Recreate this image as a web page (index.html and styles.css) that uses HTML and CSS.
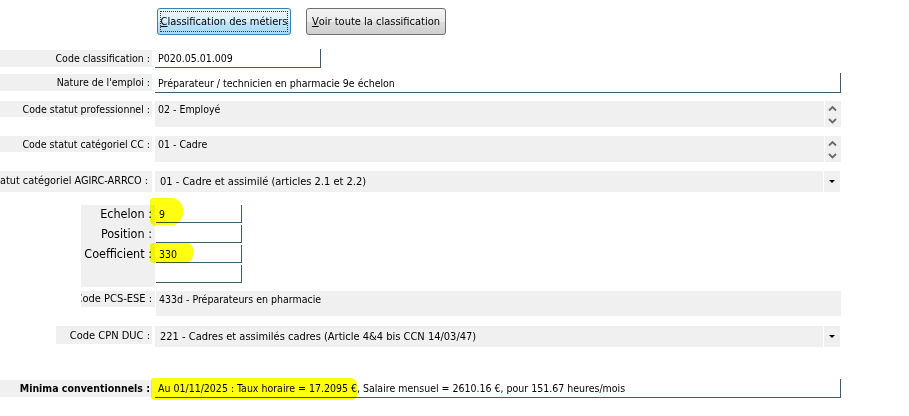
FILE: index.html
```html
<html>
    <head>
        <link rel="stylesheet" href="styles.css">
    </head>
    <body>
        <div class="toolbar">
            <div class="btn btnFocus"><span class="focusRing"><u>C</u>lassification des métiers</span></div>
            <div class="btn"><u>V</u>oir toute la classification</div>
        </div>

        <div class="form">
            <div class="row rowCode">
                <div class="lbl">Code classification :</div>
                <div class="edit editShort"><span class="txt">P020.05.01.009</span></div>
            </div>

            <div class="row rowNature">
                <div class="lbl">Nature de l'emploi :</div>
                <div class="edit editWide"><span class="txt">Préparateur / technicien en pharmacie 9e échelon</span></div>
            </div>

            <div class="row rowMemo">
                <div class="lbl lblTop">Code statut professionnel :</div>
                <div class="memo">
                    <div class="memoText">02 - Employé</div>
                    <div class="spin">
                        <svg width="16" height="26" viewBox="0 0 16 26"><path d="M4 9.5 L7.5 6 L11 9.5" fill="none" stroke="#6a6a6a" stroke-width="1.8"/><path d="M4 18 L7.5 21.5 L11 18" fill="none" stroke="#6a6a6a" stroke-width="1.8"/></svg>
                    </div>
                </div>
            </div>

            <div class="row rowMemo rowCC">
                <div class="lbl lblTop">Code statut catégoriel CC :</div>
                <div class="memo">
                    <div class="memoText">01 - Cadre</div>
                    <div class="spin">
                        <svg width="16" height="26" viewBox="0 0 16 26"><path d="M4 9.5 L7.5 6 L11 9.5" fill="none" stroke="#6a6a6a" stroke-width="1.8"/><path d="M4 18 L7.5 21.5 L11 18" fill="none" stroke="#6a6a6a" stroke-width="1.8"/></svg>
                    </div>
                </div>
            </div>

            <div class="row rowCombo rowAgirc">
                <div class="lbl lblBig"><span>Statut catégoriel AGIRC-ARRCO :</span></div>
                <div class="combo">
                    <div class="comboText">01 - Cadre et assimilé (articles 2.1 et 2.2)</div>
                    <div class="comboBtn"><span class="arrow"></span></div>
                </div>
            </div>

            <div class="echelonPanel">
                <div class="echelonLabels">
                    <div class="eLbl">Echelon :</div>
                    <div class="eLbl">Position :</div>
                    <div class="eLbl">Coefficient :</div>
                    <div class="eLbl"></div>
                </div>
                <div class="echelonInputs">
                    <div class="edit editSmall"><span class="marker markerEchelon"></span><span class="txt">9</span></div>
                    <div class="edit editSmall"><span class="txt"></span></div>
                    <div class="edit editSmall"><span class="marker markerCoef"></span><span class="txt">330</span></div>
                    <div class="edit editSmall"><span class="txt"></span></div>
                </div>
            </div>

            <div class="row rowPcs">
                <div class="lbl lblPcs"><span>Code PCS-ESE :</span></div>
                <div class="memo memoPlain">
                    <div class="memoText">433d - Préparateurs en pharmacie</div>
                </div>
            </div>

            <div class="row rowCombo rowCpn">
                <div class="lbl lblCpn"><span>Code CPN DUC :</span></div>
                <div class="combo">
                    <div class="comboText">221 - Cadres et assimilés cadres (Article 4&amp;4 bis CCN 14/03/47)</div>
                    <div class="comboBtn"><span class="arrow"></span></div>
                </div>
            </div>

            <div class="row rowMinima">
                <div class="lbl lblBold">Minima conventionnels :</div>
                <div class="edit editWide"><span class="marker markerMinima"></span><span class="txt">Au 01/11/2025 : Taux horaire = 17.2095 €, Salaire mensuel = 2610.16 €, pour 151.67 heures/mois</span></div>
            </div>
        </div>
    </body>
</html>
```

FILE: styles.css
```css
body {
  margin: 0;
  width: 909px;
  height: 416px;
  overflow: hidden;
  background: #ffffff;
  font-family: "DejaVu Sans Condensed", "DejaVu Sans", sans-serif;
  font-size: 10.5px;
  color: #000000;
}

/* buttons */
.toolbar {
  display: flex;
  gap: 15px;
  padding: 8px 0 0 157px;
}
.btn {
  box-sizing: border-box;
  height: 27px;
  width: 140px;
  display: flex;
  align-items: center;
  justify-content: center;
  white-space: nowrap;
  font-size: 11px;
  border: 1px solid #707070;
  border-radius: 3px;
  background: linear-gradient(to bottom, #f2f2f2 0%, #ebebeb 50%, #dddddd 51%, #cfcfcf 100%);
}
.btnFocus {
  width: 134px;
  border-color: #3c7fb1;
  background: linear-gradient(to bottom, #eaf6fd 0%, #d9f0fc 50%, #bee6fd 51%, #a7d9f5 100%);
  padding: 2px;
}
.focusRing {
  box-sizing: border-box;
  width: 100%;
  height: 100%;
  display: flex;
  align-items: center;
  justify-content: center;
  border: 1px dotted #333333;
}

/* rows */
.form {
  margin-top: 14px;
}
.row {
  display: flex;
  align-items: flex-start;
  gap: 3px;
}
.lbl {
  box-sizing: border-box;
  width: 152px;
  flex: none;
  display: flex;
  justify-content: flex-end;
  white-space: nowrap;
  background: #f0f0f0;
  padding-right: 2px;
}
.rowCode { height: 19px; }
.rowCode .lbl { height: 17px; line-height: 17px; margin-top: 1px; }
.rowNature { height: 20px; margin-top: 5px; }
.rowNature .lbl { height: 17px; line-height: 17px; margin-top: 1px; }

.edit {
  position: relative;
  box-sizing: border-box;
  background: #ffffff;
  border-right: 1px solid #3f5b6d;
  border-bottom: 1px solid #3f5b6d;
  padding-left: 3px;
  white-space: nowrap;
}
.edit .txt {
  position: relative;
}
.editShort { width: 166px; height: 19px; line-height: 19px; }
.editWide { width: 686px; height: 20px; line-height: 20px; }

.marker {
  position: absolute;
  background: #ffff10;
  mix-blend-mode: multiply;
  filter: blur(0.6px);
}
.markerEchelon { left: -6px; top: -7px; width: 33px; height: 28px; border-radius: 4px 12px 14px 6px; }
.markerCoef { left: -6px; top: -2px; width: 43px; height: 20px; border-radius: 3px 6px 8px 4px; }
.markerMinima { left: -4px; top: -1px; width: 206px; height: 22px; border-radius: 3px 6px 6px 3px; }

/* memo with spinner */
.rowMemo { height: 26px; margin-top: 8px; }
.rowCC { margin-top: 9px; }
.lblTop { height: 16px; line-height: 16px; }
.memo {
  display: flex;
  gap: 1px;
  width: 686px;
  height: 26px;
}
.memoText {
  flex: 1;
  background: #f0f0f0;
  padding: 0 0 0 3px;
  line-height: 16px;
}
.spin {
  width: 16px;
  background: #f0f0f0;
}
.memoPlain { height: 25px; }

/* combo */
.rowCombo { height: 21px; margin-top: 9px; }
.lblBig {
  height: 21px;
  line-height: 20px;
  font-size: 10.8px;
  padding-right: 4px;
}
.combo {
  display: flex;
  gap: 1px;
  width: 685px;
  height: 21px;
}
.comboText {
  flex: 1;
  background: #f0f0f0;
  padding-left: 5px;
  line-height: 21px;
  font-size: 11px;
}
.comboBtn {
  width: 16px;
  background: #f0f0f0;
  display: flex;
  align-items: center;
  justify-content: center;
}
.arrow {
  width: 0;
  height: 0;
  border-left: 3px solid transparent;
  border-right: 3px solid transparent;
  border-top: 3px solid #000000;
}

/* echelon block */
.echelonPanel {
  display: flex;
  gap: 1px;
  margin: 13px 0 0 81px;
}
.echelonLabels {
  width: 74px;
  height: 82px;
  background: #f0f0f0;
  display: flex;
  flex-direction: column;
  gap: 2px;
}
.eLbl {
  height: 18px;
  line-height: 18px;
  text-align: right;
  font-size: 12.5px;
  padding-right: 3px;
}
.echelonInputs {
  display: flex;
  flex-direction: column;
  gap: 2px;
}
.editSmall { width: 86px; height: 18px; line-height: 18px; }

/* pcs / cpn */
.rowPcs { height: 25px; margin-top: 4px; gap: 1px; }
.lblPcs {
  width: 74px;
  margin-left: 81px;
  height: 16px;
  line-height: 16px;
  overflow: hidden;
  font-size: 11px;
  padding-right: 3px;
}
.rowPcs .memo { width: 685px; }
.rowCpn { margin-top: 10px; }
.lblCpn {
  width: 96px;
  margin-left: 56px;
  height: 18px;
  line-height: 19px;
  font-size: 11px;
}

/* minima */
.rowMinima { height: 19px; margin-top: 32px; }
.lblBold {
  font-weight: bold;
  height: 17px;
  line-height: 17px;
  margin-top: 1px;
}
.rowMinima .editWide { height: 19px; line-height: 19px; }
```
